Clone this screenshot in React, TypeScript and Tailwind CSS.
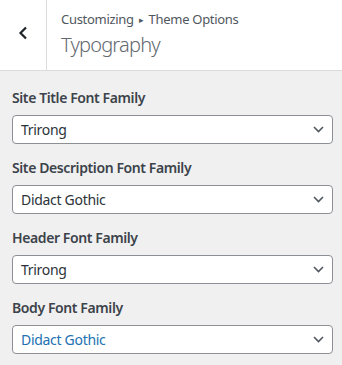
const FIELDS = [
  { label: "Site Title Font Family", value: "Trirong" },
  { label: "Site Description Font Family", value: "Didact Gothic" },
  { label: "Header Font Family", value: "Trirong" },
  { label: "Body Font Family", value: "Didact Gothic", hover: true },
];

function FontSelect({ label, value, hover }: { label: string; value: string; hover?: boolean }) {
  return (
    <div className="mb-[12px]">
      <div className="text-[14px] font-semibold leading-[24px] text-[#3c434a] mb-[5px] tracking-[-0.4px]">{label}</div>
      <div className="h-[29px] w-[321px] rounded-[4px] border border-[#8c8f94] bg-white flex items-center justify-between pl-[8px] pr-[8px]">
        <span className={`text-[14px] tracking-[-0.3px] ${hover ? "text-[#2271b1]" : "text-[#2c3338]"}`}>{value}</span>
        <svg width="11" height="7" viewBox="0 0 11 7">
          <path d="M1 1 L5.5 5.5 L10 1" fill="none" stroke="#50575e" strokeWidth="1.6" />
        </svg>
      </div>
    </div>
  );
}

export default function App() {
  return (
    <div className="w-[342px] h-[365px] bg-[#f0f0f1] font-['Noto_Sans',sans-serif] overflow-hidden">
      {/* section header */}
      <div className="h-[71px] bg-white border-b border-[#dcdcde] flex">
        <div className="w-[47px] border-r border-[#dcdcde] flex items-center justify-center pb-[4px]">
          <svg width="10" height="14" viewBox="0 0 10 14">
            <path d="M8 1.5 L2.5 7 L8 12.5" fill="none" stroke="#1d2327" strokeWidth="2.2" />
          </svg>
        </div>
        <div className="pl-[14px] pt-[10px]">
          <div className="text-[13px] leading-[18px] text-[#50575e] tracking-[-0.3px]">
            Customizing <span className="text-[9px] align-[1px] mx-[2px]">▸</span> Theme Options
          </div>
          <div className="text-[20px] leading-[30px] font-light text-[#646970] mt-[1px] tracking-[-0.8px]">Typography</div>
        </div>
      </div>
      <div className="pt-[15px] pl-[12px]">
        {FIELDS.map((f) => (
          <FontSelect key={f.label} label={f.label} value={f.value} hover={f.hover} />
        ))}
      </div>
    </div>
  );
}
